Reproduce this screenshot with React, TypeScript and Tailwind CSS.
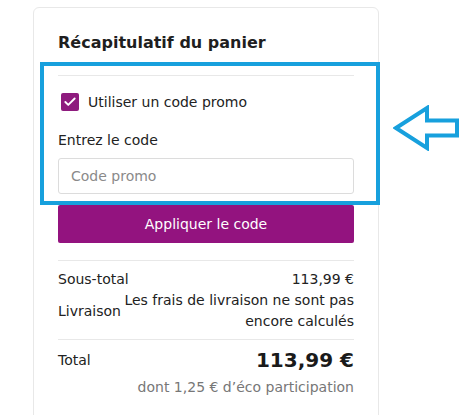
import { Check } from "lucide-react";

const font = "font-['DejaVu_Sans','Verdana',sans-serif]";

const Arrow = () => (
  <svg width="70" height="46" viewBox="0 0 70 46" fill="none">
    <polygon
      points="3,23 34,3 34,15.5 64,15.5 64,30.5 34,30.5 34,43"
      stroke="#17a0dd"
      strokeWidth="4"
      strokeLinejoin="miter"
    />
  </svg>
);

const App = () => {
  return (
    <div className={`h-[415px] overflow-hidden bg-white pt-[7px] pl-[33px] text-[#222] ${font}`}>
      <div className="flex items-start">
        <div className="relative w-[346px] rounded-md border border-[#e8e8e8] bg-white px-6 pt-[23px] pb-16">
          <h2 className="text-[16px] font-bold leading-6 text-[#1f1f1f]">Récapitulatif du panier</h2>
          <div className="mt-5 border-t border-[#e8e8e8]" />

          <label className="mt-4 flex items-center gap-[9px] text-[14px] leading-5">
            <span className="ml-[3px] flex h-[18px] w-[18px] items-center justify-center rounded-[2px] bg-[#8e1b7e]">
              <Check className="h-[14px] w-[14px] text-white" strokeWidth={3.2} />
            </span>
            Utiliser un code promo
          </label>

          <p className="mt-[18px] text-[14px] leading-5">Entrez le code</p>
          <input
            className={`mt-2 h-[36px] w-full rounded-[3px] border border-[#dcdcdc] px-3 text-[14px] placeholder:text-[#8a8a8a] ${font}`}
            placeholder="Code promo"
          />

          <button className="mt-[11px] h-[38px] w-full rounded-[2px] bg-[#93137f] text-[14px] text-white">
            Appliquer le code
          </button>

          <div className="mt-[17px] border-t border-[#e8e8e8]" />

          <div className="mt-2 flex justify-between text-[14px] leading-[21px]">
            <span>Sous-total</span>
            <span>113,99 €</span>
          </div>
          <div className="flex items-center justify-between text-[14px] leading-[21px]">
            <span>Livraison</span>
            <span className="w-[232px] text-right">Les frais de livraison ne sont pas encore calculés</span>
          </div>

          <div className="mt-[7px] border-t border-[#e8e8e8]" />

          <div className="mt-[6px] flex items-center justify-between">
            <span className="text-[14px] leading-[21px]">Total</span>
            <span className="text-[20px] font-bold leading-7 text-[#1a1a1a]">113,99 €</span>
          </div>
          <p className="mt-[3px] text-right text-[14px] leading-[21px] text-[#777]">
            dont 1,25 € d’éco participation
          </p>

          <div className="pointer-events-none absolute left-[6px] top-[54px] h-[143px] w-[340px] border-4 border-[#17a0dd]" />
        </div>

        <div className="ml-[14px] mt-[98px]">
          <Arrow />
        </div>
      </div>
    </div>
  );
};

export default App;
